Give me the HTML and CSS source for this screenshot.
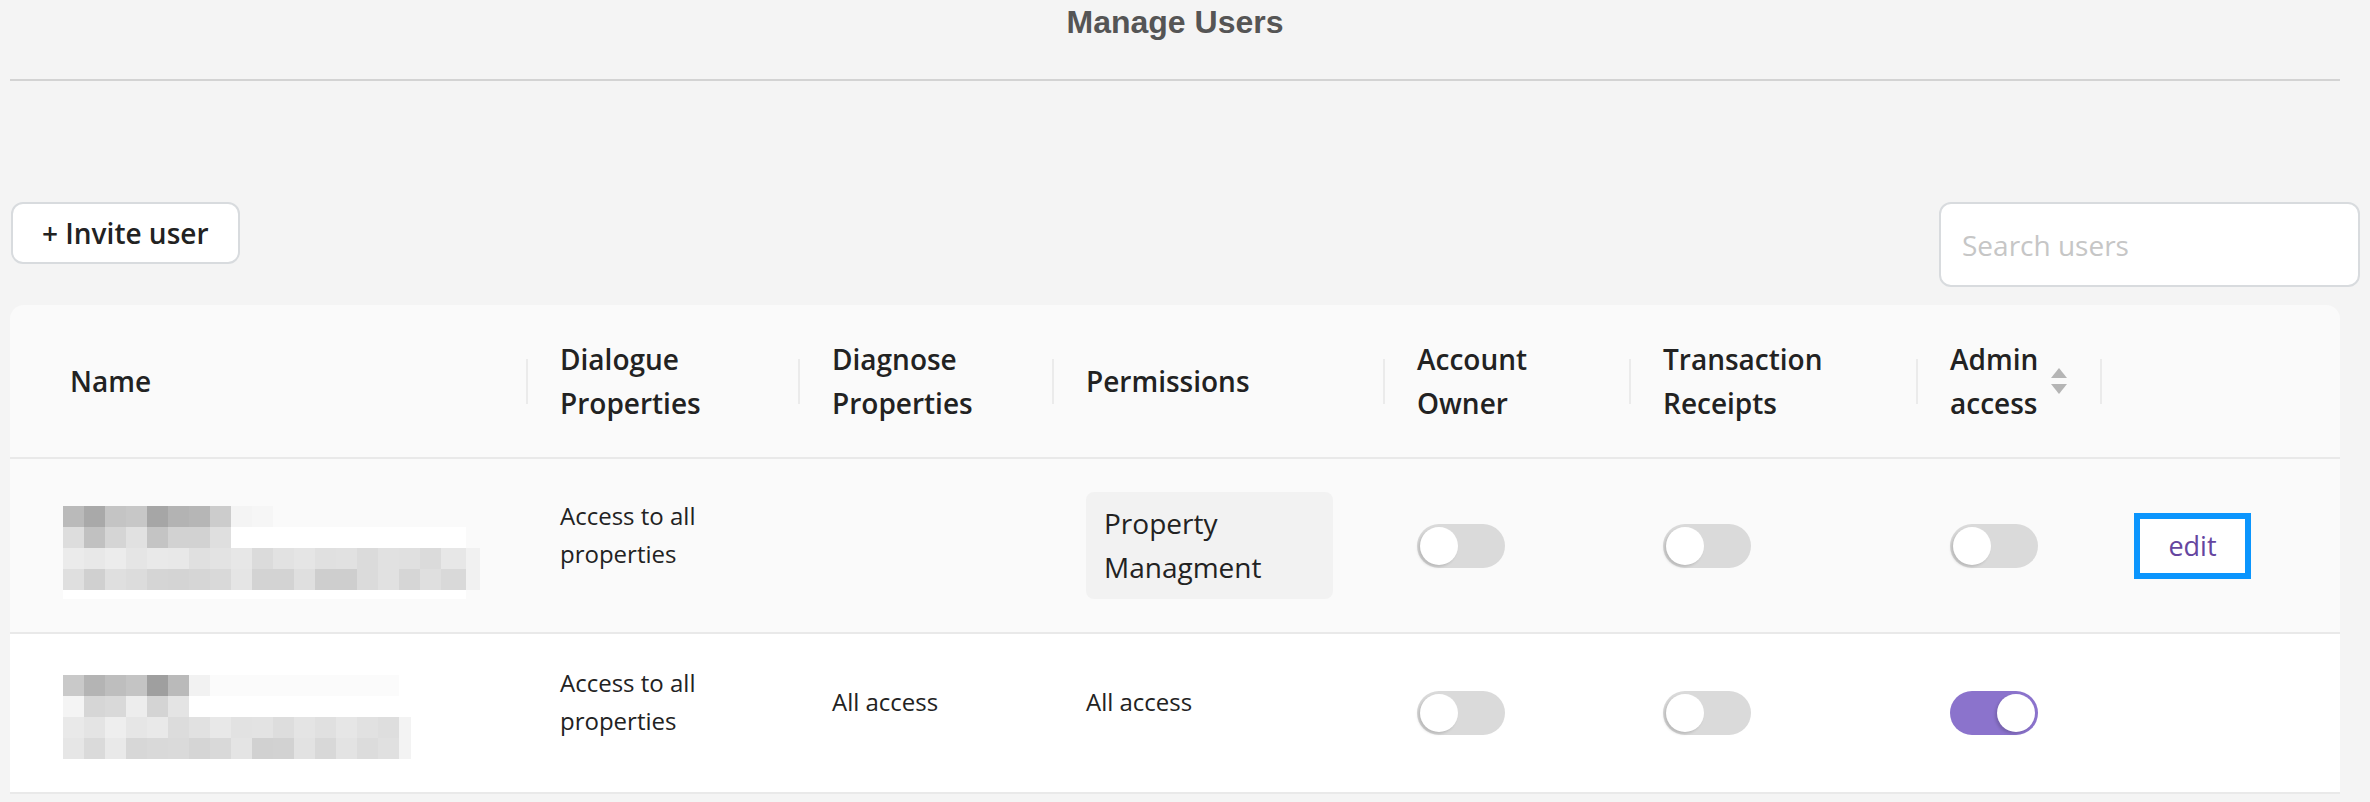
FILE: index.html
```html
<!DOCTYPE html>
<html lang="en">
<head>
    <meta charset="UTF-8">
    <meta name="viewport" content="width=device-width, initial-scale=1.0">
    <title>Manage Users</title>
    <link rel="stylesheet" href="styles.css">
</head>
<body>
    <div class="container">
        <h1 class="page-title">Manage Users</h1>
        <div class="divider"></div>

        <div class="toolbar">
            <button class="invite-btn">+ Invite user</button>
            <input class="search" type="text" placeholder="Search users">
        </div>

        <div class="users-table">
            <div class="table-row table-head">
                <div class="th th-name">Name</div>
                <div class="th">Dialogue<br>Properties</div>
                <div class="th">Diagnose<br>Properties</div>
                <div class="th">Permissions</div>
                <div class="th">Account<br>Owner</div>
                <div class="th">Transaction<br>Receipts</div>
                <div class="th">
                    <span>Admin<br>access</span>
                    <svg class="sort-icon" width="18" height="26" viewBox="0 0 18 26">
                        <path d="M1 10 L9 0 L17 10 Z" />
                        <path d="M1 16 L17 16 L9 26 Z" />
                    </svg>
                </div>
                <div class="th"></div>
            </div>

            <!-- row 1 -->
            <div class="table-row body-row">
                <div class="td td-name">
                    <svg class="blurred-name" width="420" height="107" viewBox="0 -14 420 107">
                        <g>
                            <rect x="0" y="0" width="21" height="21" fill="#bababa"/>
                            <rect x="21" y="0" width="21" height="21" fill="#a9a9a9"/>
                            <rect x="42" y="0" width="21" height="21" fill="#c4c4c4"/>
                            <rect x="63" y="0" width="21" height="21" fill="#c7c7c7"/>
                            <rect x="84" y="0" width="21" height="21" fill="#a6a6a6"/>
                            <rect x="105" y="0" width="21" height="21" fill="#b3b3b3"/>
                            <rect x="126" y="0" width="21" height="21" fill="#b6b6b6"/>
                            <rect x="147" y="0" width="21" height="21" fill="#cccccc"/>
                            <rect x="168" y="0" width="21" height="21" fill="#f4f4f4"/>
                            <rect x="189" y="0" width="21" height="21" fill="#f6f6f6"/>
                        </g>
                        <g>
                            <rect x="0" y="21" width="21" height="21" fill="#dddddd"/>
                            <rect x="21" y="21" width="21" height="21" fill="#c1c1c1"/>
                            <rect x="42" y="21" width="21" height="21" fill="#d5d5d5"/>
                            <rect x="63" y="21" width="21" height="21" fill="#e1e1e1"/>
                            <rect x="84" y="21" width="21" height="21" fill="#c4c4c4"/>
                            <rect x="105" y="21" width="21" height="21" fill="#d2d2d2"/>
                            <rect x="126" y="21" width="21" height="21" fill="#d2d2d2"/>
                            <rect x="147" y="21" width="21" height="21" fill="#dfdfdf"/>
                            <rect x="168" y="21" width="235" height="21" fill="#ffffff"/>
                        </g>
                        <g>
                            <rect x="0" y="42" width="21" height="21" fill="#ebebeb"/>
                            <rect x="21" y="42" width="21" height="21" fill="#e8e8e8"/>
                            <rect x="42" y="42" width="21" height="21" fill="#ececec"/>
                            <rect x="63" y="42" width="21" height="21" fill="#e5e5e5"/>
                            <rect x="84" y="42" width="21" height="21" fill="#e9e9e9"/>
                            <rect x="105" y="42" width="21" height="21" fill="#e8e8e8"/>
                            <rect x="126" y="42" width="21" height="21" fill="#e0e0e0"/>
                            <rect x="147" y="42" width="21" height="21" fill="#e3e3e3"/>
                            <rect x="168" y="42" width="21" height="21" fill="#e7e7e7"/>
                            <rect x="189" y="42" width="21" height="21" fill="#dbdbdb"/>
                            <rect x="210" y="42" width="21" height="21" fill="#e2e2e2"/>
                            <rect x="231" y="42" width="21" height="21" fill="#e5e5e5"/>
                            <rect x="252" y="42" width="21" height="21" fill="#e0e0e0"/>
                            <rect x="273" y="42" width="21" height="21" fill="#e1e1e1"/>
                            <rect x="294" y="42" width="21" height="21" fill="#dbdbdb"/>
                            <rect x="315" y="42" width="21" height="21" fill="#e1e1e1"/>
                            <rect x="336" y="42" width="21" height="21" fill="#e0e0e0"/>
                            <rect x="357" y="42" width="21" height="21" fill="#dbdbdb"/>
                            <rect x="378" y="42" width="25" height="21" fill="#e7e7e7"/>
                            <rect x="403" y="42" width="14" height="42" fill="#f1f1f1"/>
                        </g>
                        <g>
                            <rect x="0" y="63" width="21" height="21" fill="#dfdfdf"/>
                            <rect x="21" y="63" width="21" height="21" fill="#d0d0d0"/>
                            <rect x="42" y="63" width="21" height="21" fill="#dfdfdf"/>
                            <rect x="63" y="63" width="21" height="21" fill="#dcdcdc"/>
                            <rect x="84" y="63" width="21" height="21" fill="#d5d5d5"/>
                            <rect x="105" y="63" width="21" height="21" fill="#d4d4d4"/>
                            <rect x="126" y="63" width="21" height="21" fill="#d6d6d6"/>
                            <rect x="147" y="63" width="21" height="21" fill="#d9d9d9"/>
                            <rect x="168" y="63" width="21" height="21" fill="#e5e5e5"/>
                            <rect x="189" y="63" width="21" height="21" fill="#d3d3d3"/>
                            <rect x="210" y="63" width="21" height="21" fill="#d3d3d3"/>
                            <rect x="231" y="63" width="21" height="21" fill="#dfdfdf"/>
                            <rect x="252" y="63" width="21" height="21" fill="#cecece"/>
                            <rect x="273" y="63" width="21" height="21" fill="#cecece"/>
                            <rect x="294" y="63" width="21" height="21" fill="#dbdbdb"/>
                            <rect x="315" y="63" width="21" height="21" fill="#e1e1e1"/>
                            <rect x="336" y="63" width="21" height="21" fill="#d6d6d6"/>
                            <rect x="357" y="63" width="21" height="21" fill="#dfdfdf"/>
                            <rect x="378" y="63" width="25" height="21" fill="#d9d9d9"/>
                        </g>
                        <rect x="0" y="84" width="403" height="9" fill="#ffffff"/>
                    </svg>
                </div>
                <div class="td"><p class="cell-text">Access to all<br>properties</p></div>
                <div class="td"></div>
                <div class="td"><span class="perm-pill">Property<br>Managment</span></div>
                <div class="td"><span class="toggle"><span class="knob"></span></span></div>
                <div class="td"><span class="toggle"><span class="knob"></span></span></div>
                <div class="td"><span class="toggle"><span class="knob"></span></span></div>
                <div class="td"><button class="edit-btn">edit</button></div>
            </div>

            <!-- row 2 -->
            <div class="table-row body-row alt">
                <div class="td td-name">
                    <svg class="blurred-name" width="360" height="92" viewBox="0 -8 360 92">
                        <g>
                            <rect x="0" y="0" width="21" height="21" fill="#c9c9c9"/>
                            <rect x="21" y="0" width="21" height="21" fill="#b4b4b4"/>
                            <rect x="42" y="0" width="21" height="21" fill="#bebebe"/>
                            <rect x="63" y="0" width="21" height="21" fill="#c4c4c4"/>
                            <rect x="84" y="0" width="21" height="21" fill="#9f9f9f"/>
                            <rect x="105" y="0" width="21" height="21" fill="#bababa"/>
                            <rect x="126" y="0" width="21" height="21" fill="#f2f2f2"/>
                            <rect x="147" y="0" width="189" height="21" fill="#fbfbfb"/>
                        </g>
                        <g>
                            <rect x="0" y="21" width="21" height="21" fill="#f4f4f4"/>
                            <rect x="21" y="21" width="21" height="21" fill="#d6d6d6"/>
                            <rect x="42" y="21" width="21" height="21" fill="#d9d9d9"/>
                            <rect x="63" y="21" width="21" height="21" fill="#ededed"/>
                            <rect x="84" y="21" width="21" height="21" fill="#d4d4d4"/>
                            <rect x="105" y="21" width="21" height="21" fill="#e4e4e4"/>
                        </g>
                        <g>
                            <rect x="0" y="42" width="21" height="21" fill="#e9e9e9"/>
                            <rect x="21" y="42" width="21" height="21" fill="#e4e4e4"/>
                            <rect x="42" y="42" width="21" height="21" fill="#eeeeee"/>
                            <rect x="63" y="42" width="21" height="21" fill="#e6e6e6"/>
                            <rect x="84" y="42" width="21" height="21" fill="#e9e9e9"/>
                            <rect x="105" y="42" width="21" height="21" fill="#dcdcdc"/>
                            <rect x="126" y="42" width="21" height="21" fill="#e1e1e1"/>
                            <rect x="147" y="42" width="21" height="21" fill="#e8e8e8"/>
                            <rect x="168" y="42" width="21" height="21" fill="#e2e2e2"/>
                            <rect x="189" y="42" width="21" height="21" fill="#e3e3e3"/>
                            <rect x="210" y="42" width="21" height="21" fill="#dddddd"/>
                            <rect x="231" y="42" width="21" height="21" fill="#e4e4e4"/>
                            <rect x="252" y="42" width="21" height="21" fill="#e0e0e0"/>
                            <rect x="273" y="42" width="21" height="21" fill="#e6e6e6"/>
                            <rect x="294" y="42" width="21" height="21" fill="#e1e1e1"/>
                            <rect x="315" y="42" width="21" height="21" fill="#dedede"/>
                            <rect x="336" y="42" width="12" height="42" fill="#f3f3f3"/>
                        </g>
                        <g>
                            <rect x="0" y="63" width="21" height="21" fill="#e6e6e6"/>
                            <rect x="21" y="63" width="21" height="21" fill="#dadada"/>
                            <rect x="42" y="63" width="21" height="21" fill="#e9e9e9"/>
                            <rect x="63" y="63" width="21" height="21" fill="#d7d7d7"/>
                            <rect x="84" y="63" width="21" height="21" fill="#d9d9d9"/>
                            <rect x="105" y="63" width="21" height="21" fill="#dadada"/>
                            <rect x="126" y="63" width="21" height="21" fill="#d5d5d5"/>
                            <rect x="147" y="63" width="21" height="21" fill="#d9d9d9"/>
                            <rect x="168" y="63" width="21" height="21" fill="#e4e4e4"/>
                            <rect x="189" y="63" width="21" height="21" fill="#d1d1d1"/>
                            <rect x="210" y="63" width="21" height="21" fill="#d2d2d2"/>
                            <rect x="231" y="63" width="21" height="21" fill="#e2e2e2"/>
                            <rect x="252" y="63" width="21" height="21" fill="#d8d8d8"/>
                            <rect x="273" y="63" width="21" height="21" fill="#e3e3e3"/>
                            <rect x="294" y="63" width="21" height="21" fill="#dcdcdc"/>
                            <rect x="315" y="63" width="21" height="21" fill="#e0e0e0"/>
                        </g>
                    </svg>
                </div>
                <div class="td"><p class="cell-text">Access to all<br>properties</p></div>
                <div class="td"><p class="cell-text">All access</p></div>
                <div class="td"><p class="cell-text">All access</p></div>
                <div class="td"><span class="toggle"><span class="knob"></span></span></div>
                <div class="td"><span class="toggle"><span class="knob"></span></span></div>
                <div class="td"><span class="toggle on"><span class="knob"></span></span></div>
                <div class="td"></div>
            </div>
        </div>
    </div>
</body>
</html>
```

FILE: styles.css
```css
body {
    margin: 0;
    background-color: #f4f4f4;
    font-family: "Open Sans", "Noto Sans", sans-serif;
    color: #222;
}
.container {
    padding: 0 30px 0 10px;
}
.page-title {
    margin: 0;
    padding-top: 4px;
    font-family: "Liberation Sans", Arial, sans-serif;
    font-size: 32px;
    line-height: 36px;
    font-weight: bold;
    color: #555;
    text-align: center;
}
.divider {
    margin-top: 39px;
    height: 2px;
    background-color: #d3d3d3;
}
.toolbar {
    display: flex;
    justify-content: space-between;
    align-items: flex-start;
    margin: 121px -20px 18px 0;
}
.invite-btn {
    margin-left: 1px;
    height: 62px;
    padding: 0 29px;
    background: #fff;
    border: 2px solid #d8dbde;
    border-radius: 12px;
    font-family: "Open Sans", sans-serif;
    font-size: 28px;
    font-weight: 600;
    color: #222;
}
.search {
    box-sizing: border-box;
    width: 421px;
    height: 85px;
    padding: 0 21px;
    background: #fff;
    border: 2px solid #d8dbde;
    border-radius: 12px;
    font-family: "Open Sans", sans-serif;
    font-size: 28px;
    color: #222;
    outline: none;
}
.search::placeholder {
    color: #c6c6c6;
}
.users-table {
    background-color: #fafafa;
    border-radius: 14px 14px 0 0;
    overflow: hidden;
}
.table-row {
    display: grid;
    grid-template-columns: 516px 272px 254px 331px 246px 287px 184px 1fr;
    border-bottom: 2px solid #e9e9e9;
}
.table-head {
    height: 152px;
}
.th {
    display: flex;
    align-items: center;
    gap: 12px;
    padding-left: 34px;
    font-size: 28px;
    line-height: 44px;
    font-weight: 600;
    color: #222;
    background: linear-gradient(#ebebeb, #ebebeb) left center / 2px 45px no-repeat;
}
.th-name {
    padding-left: 60px;
    background: none;
}
.sort-icon {
    fill: #b5b5b5;
}
.body-row {
    padding: 33px 0;
}
.body-row.alt {
    background-color: #fff;
}
.td {
    display: flex;
    align-items: center;
    padding-left: 34px;
}
.td-name {
    padding-left: 53px;
}
.blurred-name {
    display: block;
}
/* text sits a little above the row centre */
.cell-text {
    margin: -22px 0 0 0;
    font-size: 24px;
    line-height: 38px;
    color: #222;
}
.perm-pill {
    box-sizing: border-box;
    width: 247px;
    height: 107px;
    padding: 9px 18px 0;
    background-color: #f2f2f2;
    border-radius: 8px;
    font-size: 28px;
    line-height: 44px;
    color: #222;
}
.toggle {
    box-sizing: border-box;
    display: flex;
    align-items: center;
    width: 88px;
    height: 44px;
    padding: 0 3px;
    border-radius: 22px;
    background-color: #dadada;
}
.toggle.on {
    justify-content: flex-end;
    background-color: #8b73cc;
}
.knob {
    width: 38px;
    height: 38px;
    border-radius: 50%;
    background: #fff;
    box-shadow: -2px 2px 3px rgba(0,0,0,0.15);
}
.edit-btn {
    box-sizing: border-box;
    width: 117px;
    height: 66px;
    padding: 0;
    background: #fff;
    border: 6px solid #0b95fd;
    font-family: "Open Sans", sans-serif;
    font-size: 27px;
    color: #65459f;
}
```
